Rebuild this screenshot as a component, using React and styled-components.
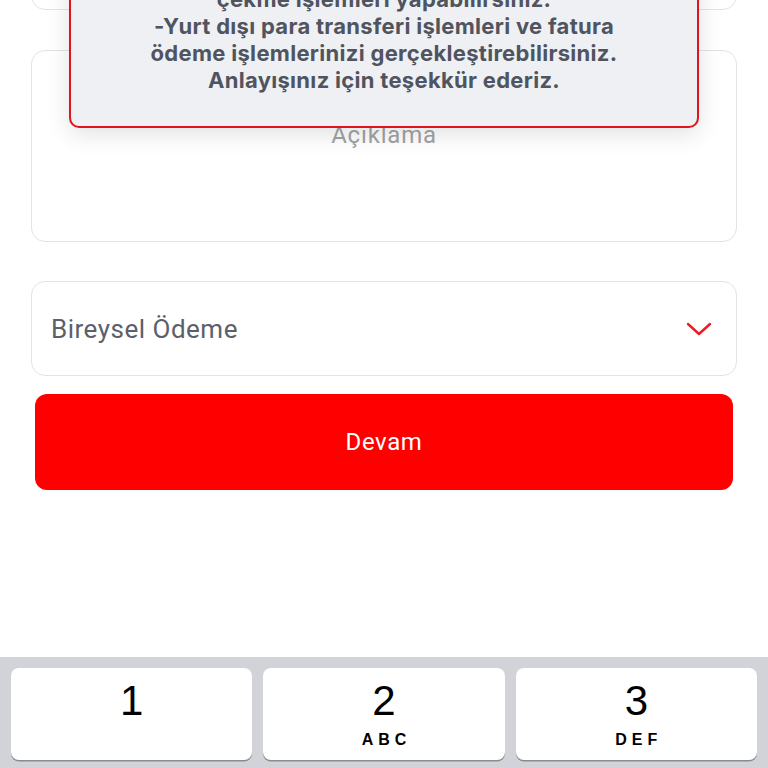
import React from "react";
import styled, { createGlobalStyle } from "styled-components";

const GlobalStyle = createGlobalStyle`
  html, body {
    margin: 0;
    padding: 0;
    background: #ffffff;
    overflow: hidden;
  }
  * { box-sizing: border-box; }
`;

const Screen = styled.div`
  position: relative;
  width: 768px;
  height: 768px;
  overflow: hidden;
  background: #ffffff;
  display: flex;
  flex-direction: column;
  font-family: Roboto, "Noto Sans", sans-serif;
`;

const Form = styled.div`
  display: flex;
  flex-direction: column;
  padding: 0 31px;
  margin-top: -84px;
`;

const Field = styled.div`
  height: ${({ h }) => h}px;
  border: 1.5px solid #e2e3e6;
  border-radius: 14px;
  background: #ffffff;
  margin-bottom: ${({ mb }) => mb || 0}px;
  display: flex;
  align-items: ${({ center }) => (center ? "center" : "flex-start")};
  justify-content: ${({ center }) => (center ? "space-between" : "center")};
  padding: ${({ center }) => (center ? "0 24px 0 19px" : "66px 0 0")};
`;

const Placeholder = styled.span`
  font-size: 24px;
  color: #a2a3a6;
  line-height: 36px;
  letter-spacing: 0.8px;
`;

const SelectText = styled.span`
  font-size: 26px;
  color: #5b606b;
  letter-spacing: 0.5px;
`;

const ContinueButton = styled.button`
  margin: 0 4px;
  height: 96px;
  border: none;
  border-radius: 12px;
  background: #fe0000;
  color: #ffffff;
  font-family: Roboto, "Noto Sans", sans-serif;
  font-size: 24px;
  letter-spacing: 0.6px;
`;

const Popup = styled.div`
  position: absolute;
  left: 69px;
  width: 630px;
  bottom: calc(100% - 128px);
  background: #eef0f4;
  border: 2px solid #e0141c;
  border-radius: 10px;
  box-shadow: 0 6px 24px rgba(0, 0, 0, 0.12);
  padding: 20px 10px 32px;
  text-align: center;
  font-family: Inter, "Noto Sans", sans-serif;
  font-weight: 700;
  font-size: 22px;
  line-height: 27px;
  letter-spacing: 0.3px;
  color: #50545f;
`;

const PopupLine = styled.div`
  white-space: nowrap;
`;

const Keyboard = styled.div`
  margin-top: auto;
  height: 111px;
  background: #d1d3d9;
  display: grid;
  grid-template-columns: repeat(3, 1fr);
  gap: 11px;
  padding: 11px 11px 0;
`;

const Key = styled.div`
  height: 92px;
  background: #ffffff;
  border-radius: 8px;
  box-shadow: 0 1.5px 0 #8a8c92;
  display: flex;
  flex-direction: column;
  align-items: center;
  color: #000000;
  font-family: "Liberation Sans", Arial, sans-serif;
`;

const Digit = styled.span`
  font-size: 42px;
  line-height: 42px;
  margin-top: 12px;
  font-weight: 400;
`;

const Letters = styled.span`
  font-size: 16px;
  font-weight: 700;
  letter-spacing: 5px;
  margin-left: 5px;
  margin-top: 9px;
`;

function Chevron() {
  return (
    <svg width="26" height="16" viewBox="0 0 26 16" fill="none">
      <path d="M2 3 L13 13 L24 3" stroke="#ee1b24" strokeWidth="2.4" strokeLinecap="round" strokeLinejoin="round" />
    </svg>
  );
}

const keys = [
  { d: "1", l: "" },
  { d: "2", l: "ABC" },
  { d: "3", l: "DEF" },
];

export default function App() {
  return (
    <Screen>
      <GlobalStyle />
      <Form>
        <Field h={94} mb={40} />
        <Field h={192} mb={39}>
          <Placeholder>Açıklama</Placeholder>
        </Field>
        <Field h={95} mb={18} center>
          <SelectText>Bireysel Ödeme</SelectText>
          <Chevron />
        </Field>
        <ContinueButton>Devam</ContinueButton>
      </Form>

      <Popup>
        <PopupLine>çekme işlemleri yapabilirsiniz.</PopupLine>
        <PopupLine>-Yurt dışı para transferi işlemleri ve fatura</PopupLine>
        <PopupLine>ödeme işlemlerinizi gerçekleştirebilirsiniz.</PopupLine>
        <PopupLine>Anlayışınız için teşekkür ederiz.</PopupLine>
      </Popup>

      <Keyboard>
        {keys.map((k) => (
          <Key key={k.d}>
            <Digit>{k.d}</Digit>
            {k.l && <Letters>{k.l}</Letters>}
          </Key>
        ))}
      </Keyboard>
    </Screen>
  );
}
